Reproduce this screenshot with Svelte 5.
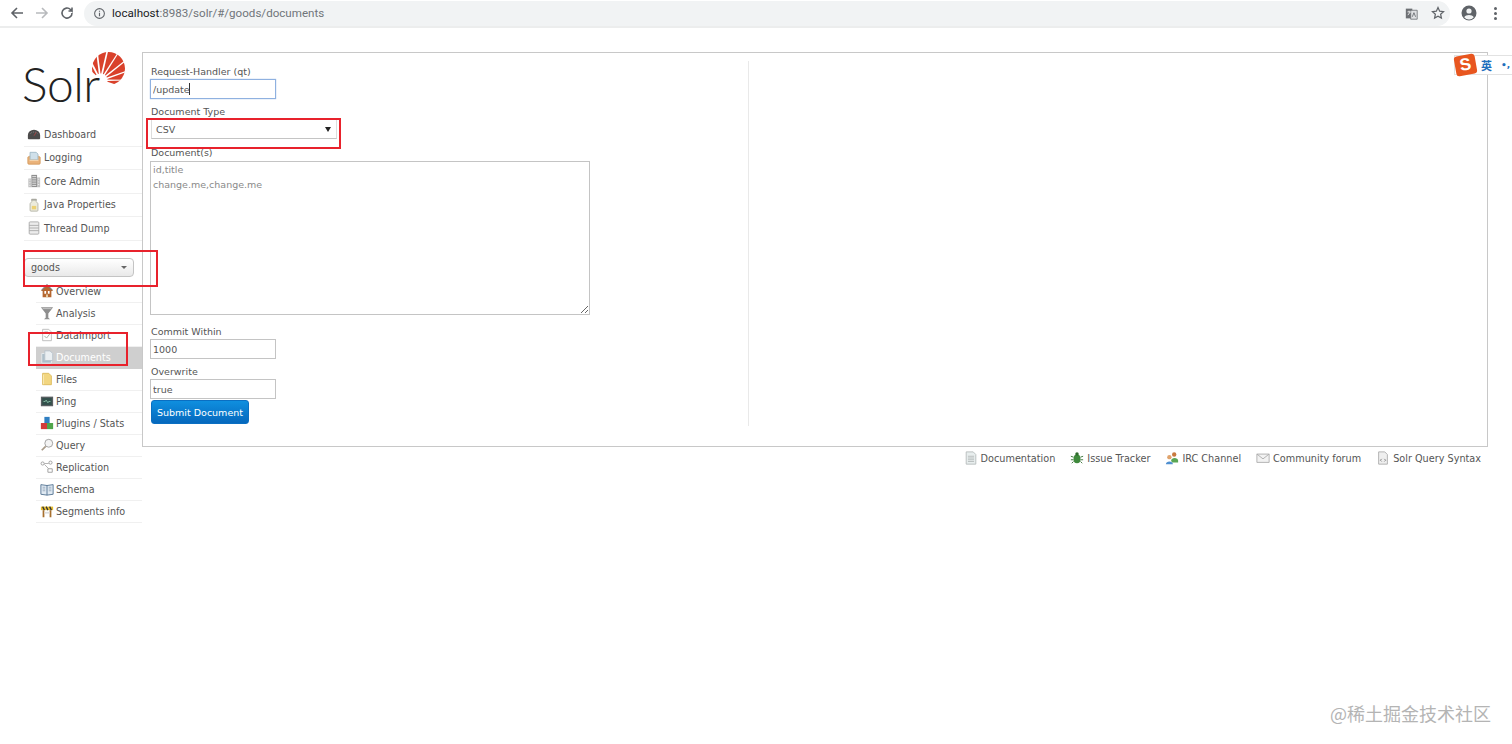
<script>
  const topItems = ['Dashboard', 'Logging', 'Core Admin', 'Java Properties', 'Thread Dump'];
  const coreItems = ['Overview', 'Analysis', 'DataImport', 'Documents', 'Files', 'Ping', 'Plugins / Stats', 'Query', 'Replication', 'Schema', 'Segments info'];
  const rays = [-128, -107, -87, -67, -48, -29, -10, 8];
  const apex = [100.5, 80.5];
  function ray(a) {
    const w = 9;
    const p = (rad, d) => {
      const t = (d * Math.PI) / 180;
      return `${(apex[0] + rad * Math.cos(t)).toFixed(1)} ${(apex[1] + rad * Math.sin(t)).toFixed(1)}`;
    };
    return `M${p(7, a - 3)}L${p(45, a - w)}L${p(45, a + w)}L${p(7, a + 3)}Z`;
  }
</script>

{#snippet icon(name)}
  <svg class="ic" viewBox="0 0 16 16" aria-hidden="true">
    {#if name === 'Dashboard'}
      <path d="M1 13V9.500a7 6.500 0 0 1 14 0V13a2 2 0 0 1-2 1H3a2 2 0 0 1-2-1z" fill="#4c4a4a"/><path d="M3.500 8a5 4 0 0 1 9 0" fill="none" stroke="#8d8d8d" stroke-dasharray="1 1"/><path d="M8 10l2.500-4" stroke="#a44"/>
    {:else if name === 'Logging'}
      <path d="M1 7l2-1h10l2 1v7a1 1 0 0 1-1 1H2a1 1 0 0 1-1-1z" fill="#eab27a" stroke="#d49a5c"/><path d="M3.500 1.500h7l2 2V10h-9z" fill="#cfe0ea" stroke="#9fb8c6"/><path d="M3 10h10v1.500H3z" fill="#f4d3ab"/>
    {:else if name === 'Core Admin'}
      <path d="M5 1h6.500v14H5z" fill="#8f8f8f"/><path d="M1.500 5H5v10H1.500zM11.500 4H15v11h-3.500z" fill="#c2c2c2"/><path d="M2.500 7H4M2.500 10H4M2.500 13H4M12.500 6H14M12.500 9H14M12.500 12H14M6 3h4.500M6 5.500h4.500M6 8h4.500M6 10.500h4.500M6 13h4.500" stroke="#eee"/>
    {:else if name === 'Java Properties'}
      <path d="M5.500 1.500h5V4l2 2.500V14a1 1 0 0 1-1 1h-7a1 1 0 0 1-1-1V6.500l2-2.500z" fill="#ecebdc" stroke="#b4b4a6"/><path d="M5 1h6v2H5z" fill="#a8a8a0"/><path d="M5.500 9h5v4h-5z" fill="#ecd176"/>
    {:else if name === 'Thread Dump'}
      <path d="M2.500 2a1 1 0 0 1 1-1h9a1 1 0 0 1 1 1v12a1 1 0 0 1-1 1h-9a1 1 0 0 1-1-1z" fill="#ececec" stroke="#a8a8a8"/><path d="M2.500 5h11M2.500 8h11M2.500 11h11" stroke="#a8a8a8"/>
    {:else if name === 'Overview'}
      <path d="M8 1L1 8h2v7h10V8h2z" fill="#b5662f"/><path d="M5 8h2v3H5zM9 8h2v3H9z" fill="#fff"/><path d="M7 12h2v3H7z" fill="#e9d9b5"/><path d="M2 7l6-6 6 6" fill="none" stroke="#7d7d7d" stroke-width="1.500"/>
    {:else if name === 'Analysis'}
      <path d="M1 1.500h14L9.500 8.500v5l2 1.500h-7l2-1.500v-5z" fill="#8e8e8e"/><path d="M3 3h10" stroke="#ccc"/>
    {:else if name === 'DataImport'}
      <path d="M3 1.500h7l3 3v10H3z" fill="#fff" stroke="#b8b8b8"/><path d="M5 9l2.500 2.500L11 7" fill="none" stroke="#9aa89a"/><path d="M5 4h4" stroke="#ccc"/>
    {:else if name === 'Documents'}
      <path d="M2 4h8l3 3v8H2z" fill="#aebfca" stroke="#e6ebee"/><path d="M5.500 1h6l3 3v8h-9z" fill="#eaeff2" stroke="#b7c4cc"/>
    {:else if name === 'Files'}
      <path d="M3 1.500h7l3 3v10H3z" fill="#f2d680" stroke="#dcb95a"/><path d="M4 3v11" stroke="#f9eab8"/>
    {:else if name === 'Ping'}
      <path d="M1 3h14v11H1z" fill="#5a5f62"/><path d="M2.500 4.500h11v8h-11z" fill="#33504c"/><path d="M4 8.500h2l1-1.500 2 3 1-1.500h2" fill="none" stroke="#8fc9ad"/>
    {:else if name === 'Plugins / Stats'}
      <path d="M5 1h6v7H5z" fill="#2f7fc2"/><path d="M1 8h7v7H1z" fill="#d23a3a"/><path d="M8 8h7v7H8z" fill="#4fa54a"/>
    {:else if name === 'Query'}
      <circle cx="10" cy="6" r="4.500" fill="#f4f4f4" stroke="#999"/><path d="M6.500 9.500L2 14" stroke="#a89a88" stroke-width="2"/>
    {:else if name === 'Replication'}
      <circle cx="3" cy="4" r="1.800" fill="#fff" stroke="#999"/><circle cx="12" cy="3" r="1.800" fill="#fff" stroke="#999"/><path d="M9 10h5v4H9z" fill="#fff" stroke="#999"/><path d="M5 4h5M5 5l5 5" stroke="#aaa" fill="none"/>
    {:else if name === 'Schema'}
      <path d="M1 3l7 1 7-1v11l-7 1-7-1z" fill="#dfe9f2" stroke="#4f6f8f"/><path d="M8 4v11" stroke="#4f6f8f"/><path d="M3 6h3M3 8h3M3 10h3M10 6h3M10 8h3M10 10h3" stroke="#9ab"/>
    {:else if name === 'Segments info'}
      <path d="M1 3h14v4H1z" fill="#e3bb2e"/><path d="M3 7h2v8H3zM11 7h2v8h-2z" fill="#a8702e"/><path d="M5 9h6v2H5z" fill="#ddd"/><path d="M3 3l2 4M7 3l2 4M11 3l2 4" stroke="#333" stroke-width="1.500"/>
    {:else if name === 'Documentation'}
      <path d="M2.500 1h8l3 3v11h-11z" fill="#e8eeee" stroke="#b5baba"/><path d="M4.500 6h7M4.500 8h7M4.500 10h7M4.500 12h7" stroke="#b5baba"/>
    {:else if name === 'Issue Tracker'}
      <ellipse cx="8" cy="9" rx="4" ry="5" fill="#3f8a3c"/><circle cx="8" cy="3.500" r="2" fill="#2e6b2c"/><path d="M1 6l3 1M1 10h3M2 14l2-2M15 6l-3 1M15 10h-3M14 14l-2-2" stroke="#2e6b2c"/>
    {:else if name === 'IRC Channel'}
      <circle cx="5" cy="7" r="2.500" fill="#e0a36c"/><circle cx="10.500" cy="4" r="2.500" fill="#c9793e"/><path d="M7 11c0-4 8-4 8 0v2H8z" fill="#5aa654"/><path d="M1 15c0-4 8-4 8 0z" fill="#4f8fd0"/>
    {:else if name === 'Community forum'}
      <path d="M1 3.500h14v9.500H1z" fill="#f2f2f2" stroke="#aaa"/><path d="M1 3.500l7 5.500 7-5.500" fill="none" stroke="#aaa"/>
    {:else}
      <path d="M3 1h7l3 3v11H3z" fill="#efefef" stroke="#aaa"/><path d="M6.500 9l-1.500 1.500L6.500 12M9.500 9l1.500 1.500L9.500 12" fill="none" stroke="#777"/>
    {/if}
  </svg>
{/snippet}

<div class="app">
  <header class="chrome">
    <div class="nav-btns">
      <svg viewBox="0 0 16 16" class="cb"><path d="M14 8H3M8 3L3 8l5 5" fill="none" stroke="#5f6368" stroke-width="1.600"/></svg>
      <svg viewBox="0 0 16 16" class="cb"><path d="M2 8h11M8 3l5 5-5 5" fill="none" stroke="#b8babd" stroke-width="1.600"/></svg>
      <svg viewBox="0 0 16 16" class="cb"><path d="M13 8a5 5 0 1 1-1.500-3.500L13 6V2.500M13 6H9.500" fill="none" stroke="#5f6368" stroke-width="1.600"/></svg>
    </div>
    <div class="omnibox">
      <svg viewBox="0 0 16 16" class="info"><circle cx="8" cy="8" r="6" fill="none" stroke="#5f6368" stroke-width="1.300"/><path d="M8 7v4.500M8 4.500v1.300" stroke="#5f6368" stroke-width="1.400"/></svg>
      <span class="url"><b>localhost</b>:8983/solr/#/goods/documents</span>
      <svg viewBox="0 0 16 16" class="translate"><path d="M1 2h8v12H1z" fill="#6d7074"/><path d="M7 4h8v11H7z" fill="#dfe1e3" stroke="#6d7074"/><path d="M3 6h4M5 4.500V6M3.500 10L6.500 6" stroke="#fff" fill="none"/><path d="M9 12l2-5 2 5" stroke="#5f6368" fill="none"/></svg>
      <svg viewBox="0 0 16 16" class="star"><path d="M8 1.800l1.900 4.100 4.400.5-3.300 3 .9 4.400L8 11.600l-3.900 2.200.9-4.400-3.300-3 4.400-.5z" fill="none" stroke="#5f6368" stroke-width="1.400"/></svg>
    </div>
    <svg viewBox="0 0 16 16" class="avatar"><circle cx="8" cy="8" r="7.500" fill="#5f6368"/><circle cx="8" cy="6" r="2.600" fill="#f1f3f4"/><path d="M3.200 12.300c1.500-3 8.100-3 9.600 0A6 6 0 0 1 8 14.500a6 6 0 0 1-4.800-2.200z" fill="#f1f3f4"/></svg>
    <div class="dots"><i></i><i></i><i></i></div>
  </header>

  <div class="page">
    <aside class="side">
      <div class="logo">
        <span class="logo-word">Solr</span>
        <svg class="sun" viewBox="88 50 40 36" aria-hidden="true">
          <defs><clipPath id="sun-clip"><circle cx="108.500" cy="68.500" r="16.500"/></clipPath></defs>
          <g fill="#d9412b" clip-path="url(#sun-clip)">{#each rays as a}<path d={ray(a)}/>{/each}</g>
        </svg>
      </div>
      <nav class="top-nav">
        {#each topItems as t}
          <div class="top-item">{@render icon(t)}<span>{t}</span></div>
        {/each}
      </nav>
      <div class="core-select"><span>goods</span><i class="caret"></i></div>
      <nav class="core-nav">
        {#each coreItems as t}
          <div class="core-item" class:active={t === 'Documents'}>{@render icon(t)}<span>{t}</span></div>
        {/each}
      </nav>
    </aside>

    <main class="main">
      <section class="box">
        <form class="form">
          <label for="qt" class="gap-label">Request-Handler (qt)</label>
          <div class="field-wrap">
            <input id="qt" class="field focus tight" value="/update" />
            <i class="cursor"></i>
          </div>
          <label for="dt" class="gap-label">Document Type</label>
          <div id="dt" class="doc-type"><span>CSV</span><i class="caret dark"></i></div>
          <label for="docs" class="docs-label">Document(s)</label>
          <textarea id="docs" class="docs" placeholder="id,title&#10;change.me,change.me"></textarea>
          <label for="cw" class="after-docs">Commit Within</label>
          <input id="cw" class="field tight" value="1000" />
          <label for="ow" class="gap-label">Overwrite</label>
          <input id="ow" class="field" value="true" />
          <button type="button" class="submit">Submit Document</button>
        </form>
        <div class="result"></div>
      </section>
      <footer class="links">
        {#each ['Documentation', 'Issue Tracker', 'IRC Channel', 'Community forum', 'Solr Query Syntax'] as t}
          <span class="link">{@render icon(t)}<span>{t}</span></span>
        {/each}
      </footer>
    </main>
  </div>

  <div class="mark m1"></div>
  <div class="mark m2"></div>
  <div class="mark m3"></div>

  <div class="ime">
    <span class="ime-s">S</span><span class="ime-t">英</span><span class="ime-p">•,</span>
  </div>
  <div class="watermark">@稀土掘金技术社区</div>
</div>

<style>
  :global(body) { margin: 0; background: #fff; }
  .app { position: relative; width: 1512px; height: 744px; overflow: hidden; font-family: "DejaVu Sans", Verdana, sans-serif; font-size: 9.600px; color: #555; }

  .chrome { display: flex; align-items: center; height: 28px; box-sizing: border-box; border-bottom: 2px solid #eceded; padding-left: 9px; background: #fff; }
  .nav-btns { display: flex; gap: 9px; align-items: center; width: 75px; flex: none; }
  .cb { width: 16px; height: 16px; }
  .omnibox { display: flex; align-items: center; width: 1366px; height: 25px; background: #f1f3f4; border-radius: 13px; box-sizing: border-box; padding: 0 5px 0 9px; flex: none; }
  .info { width: 13px; height: 13px; margin-right: 6px; }
  .url { font-family: "Roboto", "Liberation Sans", sans-serif; font-size: 11.600px; color: #70757a; flex: 1; }
  .url b { font-weight: 400; color: #202124; }
  .translate { width: 13px; height: 13px; margin-right: 13px; }
  .star { width: 14px; height: 14px; }
  .avatar { width: 16px; height: 16px; margin-left: 11px; flex: none; }
  .dots { display: flex; flex-direction: column; gap: 2px; margin-left: 17px; }
  .dots i { width: 3px; height: 3px; border-radius: 50%; background: #5f6368; }

  .page { display: flex; align-items: flex-start; }
  .side { width: 142px; flex: none; }
  .logo { position: relative; height: 95px; }
  .logo-word { position: absolute; left: 22px; top: 27px; font-family: "Lato", sans-serif; font-weight: 300; font-size: 48px; line-height: 58px; letter-spacing: -0.500px; color: #222; }
  .sun { position: absolute; left: 88px; top: 22px; width: 40px; height: 36px; }
  .ic { width: 14px; height: 14px; flex: none; }

  .top-nav { margin-left: 24px; }
  .top-item { display: flex; align-items: center; gap: 3px; height: 23.500px; box-sizing: border-box; border-bottom: 1px solid #f0f0f0; padding-left: 3px; }
  .core-select { display: flex; align-items: center; justify-content: space-between; box-sizing: border-box; width: 110px; height: 19px; margin: 17px 0 0 24px; padding: 0 6px; border: 1px solid #c4c4c4; border-radius: 4px; background: linear-gradient(#fff, #e9e9e9); }
  .caret { width: 0; height: 0; border-left: 3px solid transparent; border-right: 3px solid transparent; border-top: 3px solid #666; }
  .caret.dark { border-top: 5px solid #222; }
  .core-nav { margin: 4px 0 0 36px; }
  .core-item { display: flex; align-items: center; gap: 2px; height: 22px; box-sizing: border-box; border-bottom: 1px solid #f0f0f0; padding-left: 4px; }
  .core-item.active { background: #cfcfcf; color: #fff; border-bottom-color: #cfcfcf; }

  .main { flex: none; width: 1346px; margin-top: 24px; }
  .box { display: flex; height: 395px; box-sizing: border-box; border: 1px solid #c8c8c8; }
  .form { display: flex; flex-direction: column; align-items: flex-start; width: 605px; box-sizing: border-box; padding: 12px 0 0 7px; flex: none; font-size: 9.500px; }
  .result { margin: 8px 0 20px; border-left: 1px solid #e9e9e9; flex: 1; }
  label { display: block; line-height: 13px; height: 13px; padding-left: 1px; }
  .field-wrap { position: relative; }
  .cursor { position: absolute; left: 39px; top: 4px; width: 1px; height: 12px; background: #333; }
  .field { display: block; box-sizing: border-box; width: 126px; height: 20px; padding: 0 2px; margin: 0 0 7px; border: 1px solid #c4c4c4; font: inherit; color: #555; outline: none; }
  .field.focus { border-color: #8fb1e0; box-shadow: 0 0 1px #8fb1e0; }
  .field.tight { margin-bottom: 6px; }
  .doc-type { display: flex; align-items: center; justify-content: space-between; box-sizing: border-box; width: 186px; height: 20px; padding: 0 5px 0 4px; border: 1px solid #ddd; border-bottom-color: #c4c4c4; margin: 0 0 6px 1px; }
  .docs-label { margin-top: 1px; margin-bottom: 2px; }
  .docs { display: block; box-sizing: border-box; width: 440px; height: 154px; margin: 0; padding: 0 2px; border: 1px solid #c4c4c4; font: inherit; line-height: 15px; }
  .docs::placeholder { color: #8a8a8a; opacity: 1; }
  .after-docs { margin-top: 10px; margin-bottom: 1px; }
  .gap-label { margin-bottom: 1px; }
  .submit { display: block; width: 98px; height: 24px; padding: 0; margin: -6px 0 0 1px; border: 1px solid #0a6fc2; border-radius: 3px; background: linear-gradient(#0f8fdf, #0568bd); color: #fff; font: inherit; }

  .links { display: flex; justify-content: flex-end; gap: 15px; padding: 4px 7px 0 0; font-size: 9.700px; }
  .link { display: flex; align-items: center; gap: 3px; height: 14px; }

  .mark { position: absolute; border: 2px solid #e8222c; box-sizing: border-box; }
  .m1 { left: 146px; top: 118px; width: 195px; height: 31px; }
  .m2 { left: 23px; top: 250px; width: 135px; height: 37px; }
  .m3 { left: 28px; top: 332px; width: 100px; height: 34px; }

  .ime { position: absolute; left: 1454px; top: 55px; display: flex; align-items: center; width: 58px; height: 20px; background: #fff; border: 1px solid #e2e2e2; border-right: 0; box-sizing: border-box; }
  .ime-s { display: flex; align-items: center; justify-content: center; width: 21px; height: 20px; margin-top: -1px; background: #e8561f; color: #fff; font-family: "Liberation Sans", sans-serif; font-weight: 700; font-size: 17px; border-radius: 3px; transform: rotate(-10deg); }
  .ime-t { margin-left: 5px; font-family: "Noto Sans CJK SC", sans-serif; font-weight: 700; font-size: 11px; color: #1f6fbd; }
  .ime-p { margin-left: 9px; font-weight: 700; font-size: 9px; color: #1f6fbd; }

  .watermark { position: absolute; left: 1330px; top: 702px; font-family: "Noto Sans CJK SC", sans-serif; font-size: 18px; line-height: 22px; color: #b4b4b4; }
</style>
